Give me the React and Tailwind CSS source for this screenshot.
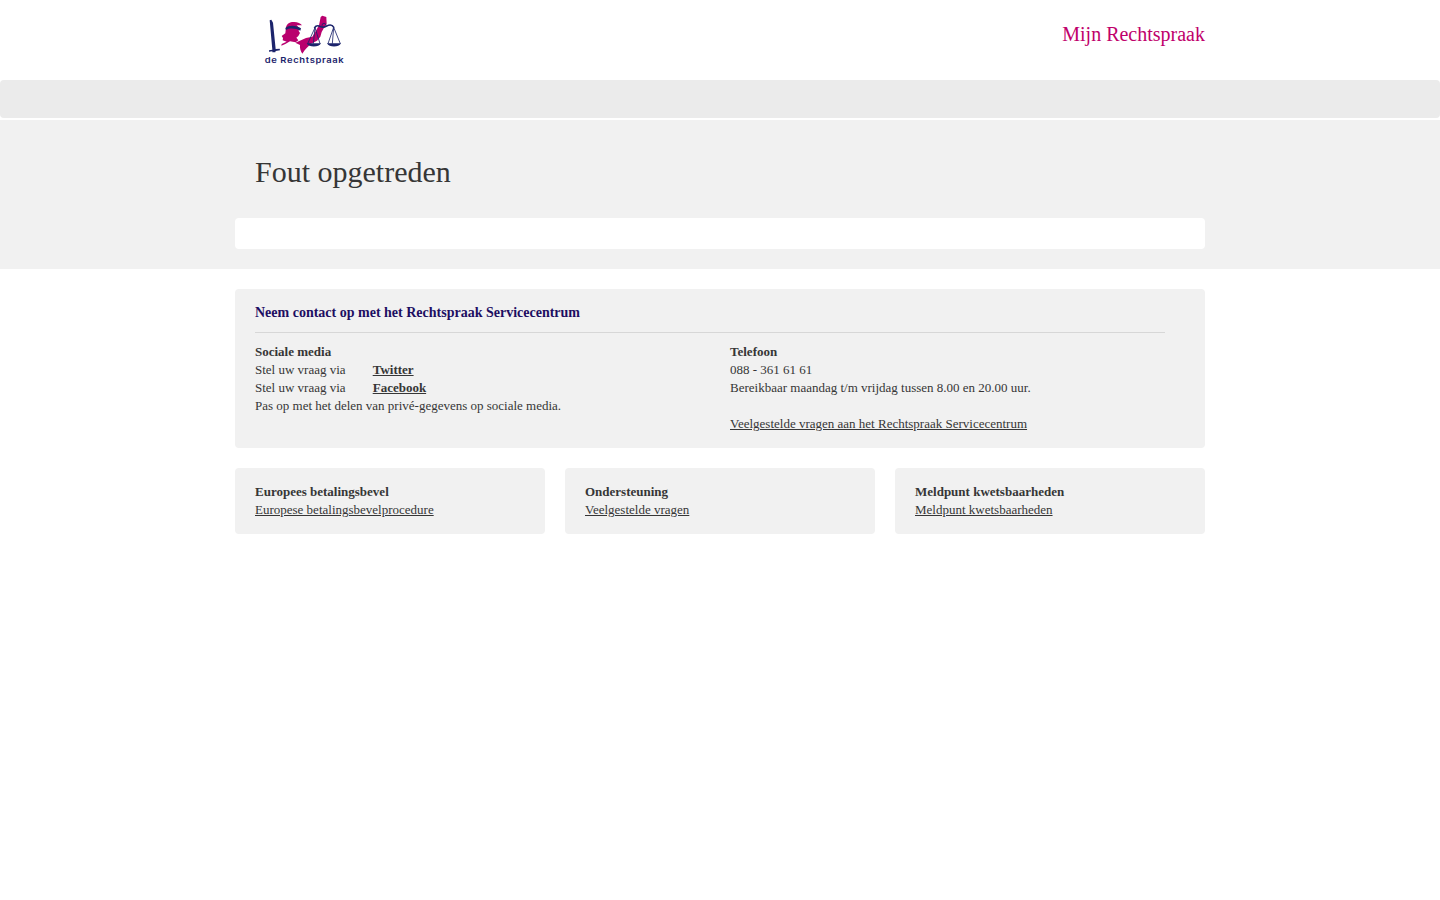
function Logo() {
  return (
    <svg className="block h-[62px] w-[100px]" viewBox="0 0 300 186" role="img" aria-label="de Rechtspraak">
      <g fill="#b9006e">
        <path d="M93 58C96 46 106 41 118 42C128 42 137 46 141 52L125 52L133 60L131 69L135 75L130 84L124 89L130 97L122 103L105 100L91 108L79 113L80 108L95 101L83 97L84 90L80 84L91 76Z" />
        <path d="M197 27L202 23L214 27L215 48L208 58L200 72L196 86L186 98L167 108L155 120L149 127L142 137C136 129 134 119 135 111L121 104L138 97L153 90L172 86L182 70L192 52Z" />
      </g>
      <g fill="#1c246c">
        <path d="M44 37L49 35L54 44L62 123L74 122L75 127L62 129L61 133L52 133L52 130L42 131L42 127L52 125Z" />
        <path d="M91 60C101 51 123 50 138 61L136 68C123 61 105 59 93 66Z" />
        <path d="M155 106L198 106C192 119 161 119 155 106Z" />
        <path d="M216 106L258 106C252 119 222 119 216 106Z" />
      </g>
      <g fill="none" stroke="#1c246c" strokeWidth="2.5">
        <path d="M178 60C189 44 197 62 207 57C217 54 228 44 237 59" strokeWidth="5" />
        <circle cx="207" cy="52" r="6" />
        <path d="M180 59L158 107M180 59L175 107M180 59L195 107M236 58L219 107M236 58L232 107M236 58L256 107" />
      </g>
      <text x="29" y="165" textLength="239" lengthAdjust="spacingAndGlyphs" fill="#1c246c" fontFamily="Inter, sans-serif" fontWeight="600" fontSize="24" letterSpacing="1.6">de Rechtspraak</text>
    </svg>
  );
}

const topics = [
  ["Europees betalingsbevel", "Europese betalingsbevelprocedure"],
  ["Ondersteuning", "Veelgestelde vragen"],
  ["Meldpunt kwetsbaarheden", "Meldpunt kwetsbaarheden"],
];

export default function App() {
  return (
    <div className="min-h-screen bg-white font-['Liberation_Serif',serif] text-[13px] leading-[18px] text-[#363636]">
      <header className="mx-auto flex h-20 w-[970px] items-start justify-between">
        <a href="#" className="ml-5 mt-2">
          <Logo />
        </a>
        <span className="mt-5 text-[20px] leading-7 text-[#c0006b]">Mijn Rechtspraak</span>
      </header>
      <nav className="mb-0.5 h-[38px] rounded bg-[#ebebeb]" />
      <section className="h-[149px] bg-[#f1f1f1]">
        <div className="mx-auto w-[970px] pt-8">
          <h1 className="h-[66px] pl-5 text-[30px] leading-10">Fout opgetreden</h1>
          <div className="h-[31px] rounded-[4px] bg-white" />
        </div>
      </section>
      <main className="mx-auto flex w-[970px] flex-col gap-5 pt-5">
        <section className="h-[159px] rounded bg-[#f1f1f1] pl-5 pr-10">
          <h2 className="h-11 border-b border-[#d7d7d7] pt-[14px] text-[14px] font-bold leading-5 text-[#1d0e62]">
            Neem contact op met het Rechtspraak Servicecentrum
          </h2>
          <div className="flex pt-[10px]">
            <div className="w-[475px]">
              <h3 className="font-bold">Sociale media</h3>
              <p className="flex"><span className="w-[117.7px]">Stel uw vraag via</span><a href="#" className="font-bold underline">Twitter</a></p>
              <p className="flex"><span className="w-[117.7px]">Stel uw vraag via</span><a href="#" className="font-bold underline">Facebook</a></p>
              <p>Pas op met het delen van privé-gegevens op sociale media.</p>
            </div>
            <div>
              <h3 className="font-bold">Telefoon</h3>
              <p>088 - 361 61 61</p>
              <p className="mb-[18px]">Bereikbaar maandag t/m vrijdag tussen 8.00 en 20.00 uur.</p>
              <a href="#" className="block underline">Veelgestelde vragen aan het Rechtspraak Servicecentrum</a>
            </div>
          </div>
        </section>
        <div className="grid grid-cols-3 gap-5">
          {topics.map(([title, link]) => (
            <section key={title} className="h-[66px] rounded bg-[#f1f1f1] px-5 pt-[15px]">
              <h3 className="font-bold">{title}</h3>
              <a href="#" className="block underline">{link}</a>
            </section>
          ))}
        </div>
      </main>
    </div>
  );
}
